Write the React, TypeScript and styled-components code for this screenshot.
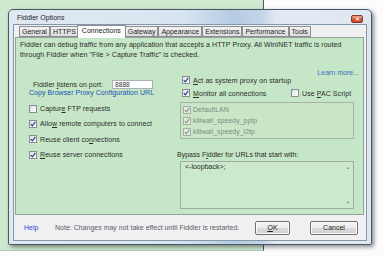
import React from 'react';
import styled, { createGlobalStyle } from 'styled-components';

const GlobalStyle = createGlobalStyle`
  html, body {
    margin: 0;
    padding: 0;
    background: #fcfcfc;
  }
  body {
    font-family: "Liberation Sans", Arial, sans-serif;
    color: #2b2b2b;
  }
`;

const Desktop = styled.div`
  position: relative;
  width: 383px;
  height: 256px;
  box-sizing: border-box;
  overflow: hidden;
  padding: 9px 11px 11px 8px;
  background: #fcfcfc;
`;

const BackWindow = styled.div`
  position: absolute;
  left: -4px;
  top: -4px;
  width: 267px;
  height: 254px;
  background: #cfe9d0;
  border-right: 1px solid #4e5a63;
  border-bottom: 1px solid #b7c7b8;
`;

const Dialog = styled.div`
  position: relative;
  height: 100%;
  box-sizing: border-box;
  display: flex;
  flex-direction: column;
  padding: 0 4px 3px 4px;
  border: 1px solid #4a5765;
  border-radius: 5px 5px 2px 2px;
  background: linear-gradient(
    90deg,
    #dfe9f2 0%,
    #d8e5f0 48%,
    #b4cbe2 62%,
    #c3d6e8 70%,
    #e2ebf3 74%,
    #dfe8f1 100%
  );
  box-shadow: 2px 2px 4px rgba(0, 0, 0, 0.45);
`;

const TitleBar = styled.div`
  height: 14px;
  display: flex;
  align-items: center;
  padding: 0 4px 0 4px;
`;

const Title = styled.div`
  flex: 1;
  font-size: 7px;
  color: #1c2630;
  margin-top: 1px;
`;

const CloseButton = styled.div`
  width: 12px;
  height: 8px;
  margin-top: 3px;
  border-radius: 2px;
  border: 1px solid #8a3a2a;
  background: linear-gradient(180deg, #eba88f 0%, #db5a3a 55%, #c63d1f 100%);
  display: flex;
  align-items: center;
  justify-content: center;
  box-sizing: border-box;
`;

const Client = styled.div`
  flex: 1;
  display: flex;
  flex-direction: column;
  background: #f0f0f2;
  border: 1px solid #8797aa;
`;

const TabStrip = styled.div`
  display: flex;
  align-items: flex-end;
  height: 12px;
  padding: 0 0 0 5px;
`;

const Tab = styled.div<{ $active?: boolean }>`
  position: relative;
  box-sizing: border-box;
  height: ${(p) => (p.$active ? '13px' : '11px')};
  margin: ${(p) => (p.$active ? '0 -1px -1px -2px' : '0')};
  padding: ${(p) => (p.$active ? '0 4px' : '0 2px')};
  z-index: ${(p) => (p.$active ? 2 : 1)};
  border: 1px solid #8c8e94;
  border-bottom: ${(p) => (p.$active ? 'none' : '1px solid #8c8e94')};
  background: ${(p) =>
    p.$active
      ? '#fbfbfb'
      : 'linear-gradient(180deg, #f3f3f3 0%, #e9e9e9 50%, #dcdcdc 100%)'};
  font-size: 7px;
  line-height: 9px;
  color: #1e1e1e;
  white-space: nowrap;
`;

const Panel = styled.div`
  height: 178px;
  box-sizing: border-box;
  margin: 0 2px 0 1px;
  padding: 2px 4px 0 4px;
  background: #c5e7c7;
  border: 1px solid #8fa496;
  display: flex;
  flex-direction: column;
`;

const Intro = styled.div`
  font-size: 7px;
  line-height: 10px;
  letter-spacing: 0.08px;
  white-space: nowrap;
`;

const LearnMore = styled.div`
  margin-top: 9px;
  text-align: right;
  font-size: 7px;
  line-height: 7px;
  color: #3d6fc0;
`;

const Columns = styled.div`
  display: grid;
  grid-template-columns: 160px 174px;
`;

const Column = styled.div`
  display: flex;
  flex-direction: column;
`;

const PortRow = styled.div`
  margin-top: 4px;
  height: 9px;
  display: flex;
  align-items: center;
  padding-left: 13px;
  font-size: 7px;
  letter-spacing: 0.05px;
`;

const PortInput = styled.div`
  margin-left: 9px;
  width: 41px;
  height: 9px;
  box-sizing: border-box;
  background: #fff;
  border: 1px solid #a9b0b8;
  font-size: 6.5px;
  line-height: 7px;
  padding-left: 2px;
  color: #333;
`;

const Link = styled.div`
  padding-left: 9px;
  font-size: 7px;
  line-height: 7px;
  letter-spacing: 0.05px;
  color: #2150b4;
`;

const CheckRow = styled.div<{ $h?: number; $indent?: number }>`
  height: ${(p) => p.$h ?? 8}px;
  display: flex;
  align-items: center;
  gap: 3px;
  padding-left: ${(p) => p.$indent ?? 0}px;
  font-size: 7px;
  letter-spacing: 0.08px;
  white-space: nowrap;
`;

const LeftChecks = styled.div`
  margin-top: 5px;
  display: flex;
  flex-direction: column;
`;

const Box = styled.span<{ $disabled?: boolean }>`
  flex: 0 0 auto;
  width: 8px;
  height: 8px;
  box-sizing: border-box;
  border: 1px solid ${(p) => (p.$disabled ? '#a3afa3' : '#878d95')};
  background: ${(p) =>
    p.$disabled
      ? '#e3ebe1'
      : 'linear-gradient(135deg, #dcdfe4 0%, #f4f5f7 60%, #ffffff 100%)'};
  display: flex;
  align-items: center;
  justify-content: center;
`;

const Spacer = styled.div<{ $h: number }>`
  height: ${(p) => p.$h}px;
`;

const MonitorLabel = styled.span`
  flex: 0 0 95px;
`;

const ListBox = styled.div`
  margin-top: 5px;
  height: 37px;
  box-sizing: border-box;
  border: 1px solid #a6b2a6;
  background: #c9e6c6;
  padding: 1px 0 0 2px;
  display: flex;
  flex-direction: column;
`;

const ListItem = styled.div`
  height: 11px;
  display: flex;
  align-items: center;
  gap: 2px;
  font-size: 7px;
  color: #7f8d82;
`;

const BypassLabel = styled.div`
  margin: 12px 0 0 -3px;
  font-size: 7px;
  line-height: 8px;
`;

const TextArea = styled.div`
  margin-top: 2px;
  height: 48px;
  box-sizing: border-box;
  border: 1px solid #a0aba2;
  background: #cbe9cd;
  display: flex;
`;

const TextAreaBody = styled.div`
  flex: 1;
  padding: 1px 4px;
  font-size: 7px;
  line-height: 8px;
  color: #2a2a2a;
`;

const ScrollBar = styled.div`
  width: 10px;
  display: flex;
  flex-direction: column;
  justify-content: space-between;
  align-items: center;
  padding: 3px 0;
  font-size: 4px;
  color: #8a948c;
`;

const Footer = styled.div`
  flex: 1;
  display: flex;
  align-items: center;
  padding: 0 8px 0 10px;
  font-size: 7px;
`;

const HelpLink = styled.span`
  color: #3c3fd0;
  width: 31px;
`;

const Note = styled.span`
  flex: 1;
  color: #5c5c66;
  white-space: nowrap;
`;

const Button = styled.div<{ $w: number; $gap?: number }>`
  width: ${(p) => p.$w}px;
  height: 14px;
  box-sizing: border-box;
  margin-left: ${(p) => p.$gap ?? 0}px;
  border: 1px solid #707070;
  border-radius: 2px;
  background: linear-gradient(180deg, #f4f4f4 0%, #ebebeb 50%, #dcdcdc 51%, #d0d0d0 100%);
  box-shadow: inset 0 0 0 1px #fbfbfb;
  display: flex;
  align-items: center;
  justify-content: center;
  font-size: 7px;
  color: #1a1a1a;
`;

const Check: React.FC<{ checked?: boolean; disabled?: boolean }> = ({
  checked,
  disabled,
}) => (
  <Box $disabled={disabled}>
    {checked && (
      <svg width="6" height="6" viewBox="0 0 6 6">
        <path
          d="M0.8 3.1 L2.4 4.9 L5.3 0.9"
          fill="none"
          stroke={disabled ? '#8e9b90' : '#2b3d8a'}
          strokeWidth="1.2"
        />
      </svg>
    )}
  </Box>
);

const tabs = [
  'General',
  'HTTPS',
  'Connections',
  'Gateway',
  'Appearance',
  'Extensions',
  'Performance',
  'Tools',
];

const adapters = ['DefaultLAN', 'killwall_speedy_pptp', 'killwall_speedy_l2tp'];

export default function App() {
  return (
    <>
      <GlobalStyle />
      <Desktop>
        <BackWindow />
        <Dialog>
          <TitleBar>
            <Title>Fiddler Options</Title>
            <CloseButton>
              <svg width="5" height="4" viewBox="0 0 5 4">
                <path d="M0.8 0.5 L4.2 3.5 M4.2 0.5 L0.8 3.5" stroke="#fff" strokeWidth="1" />
              </svg>
            </CloseButton>
          </TitleBar>
          <Client>
            <TabStrip>
              {tabs.map((t) => (
                <Tab key={t} $active={t === 'Connections'}>
                  {t}
                </Tab>
              ))}
            </TabStrip>
            <Panel>
              <Intro>
                Fiddler can debug traffic from any application that accepts a HTTP Proxy. All
                WinINET traffic is routed
                <br />
                through Fiddler when "File &gt; Capture Traffic" is checked.
              </Intro>
              <LearnMore>Learn more...</LearnMore>
              <Columns>
                <Column>
                  <PortRow>
                    <span>
                      Fiddler <u>l</u>istens on port:
                    </span>
                    <PortInput>8888</PortInput>
                  </PortRow>
                  <Link>Copy Browser Proxy Configuration URL</Link>
                  <LeftChecks>
                    <CheckRow $h={15.3} $indent={9}>
                      <Check />
                      <span>
                        Captur<u>e</u> FTP requests
                      </span>
                    </CheckRow>
                    <CheckRow $h={15.3} $indent={9}>
                      <Check checked />
                      <span>
                        Allo<u>w</u> remote computers to connect
                      </span>
                    </CheckRow>
                    <CheckRow $h={15.3} $indent={9}>
                      <Check checked />
                      <span>
                        Reuse client co<u>n</u>nections
                      </span>
                    </CheckRow>
                    <CheckRow $h={15.3} $indent={9}>
                      <Check checked />
                      <span>
                        <u>R</u>euse server connections
                      </span>
                    </CheckRow>
                  </LeftChecks>
                </Column>
                <Column>
                  <CheckRow $indent={2}>
                    <Check checked />
                    <span>
                      <u>A</u>ct as system proxy on startup
                    </span>
                  </CheckRow>
                  <Spacer $h={5} />
                  <CheckRow $indent={2}>
                    <Check checked />
                    <MonitorLabel>
                      <u>M</u>onitor all connections
                    </MonitorLabel>
                    <Check />
                    <span>
                      Use <u>P</u>AC Script
                    </span>
                  </CheckRow>
                  <ListBox>
                    {adapters.map((a) => (
                      <ListItem key={a}>
                        <Check checked disabled />
                        <span>{a}</span>
                      </ListItem>
                    ))}
                  </ListBox>
                  <BypassLabel>
                    Bypass F<u>i</u>ddler for URLs that start with:
                  </BypassLabel>
                  <TextArea>
                    <TextAreaBody>&lt;-loopback&gt;;</TextAreaBody>
                    <ScrollBar>
                      <span>▲</span>
                      <span>▼</span>
                    </ScrollBar>
                  </TextArea>
                </Column>
              </Columns>
            </Panel>
            <Footer>
              <HelpLink>Help</HelpLink>
              <Note>Note: Changes may not take effect until Fiddler is restarted.</Note>
              <Button $w={35}>
                <span>
                  <u>O</u>K
                </span>
              </Button>
              <Button $w={48} $gap={20}>
                Cancel
              </Button>
            </Footer>
          </Client>
        </Dialog>
      </Desktop>
    </>
  );
}
